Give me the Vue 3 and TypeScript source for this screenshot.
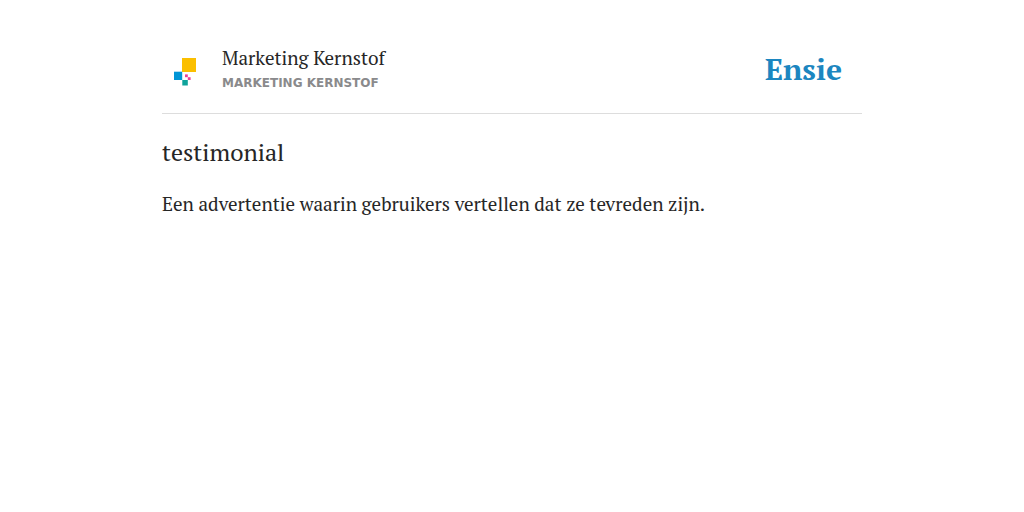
<script setup lang="ts">
const entry = {
  author: 'Marketing Kernstof',
  source: 'Marketing Kernstof',
  term: 'testimonial',
  definition: 'Een advertentie waarin gebruikers vertellen dat ze tevreden zijn.',
}
</script>

<template>
  <main class="page">
    <header class="header">
      <svg class="avatar" viewBox="0 0 50 50" aria-hidden="true">
        <rect x="20" y="12" width="14" height="14" fill="#fbbf00" />
        <rect x="12" y="25.7" width="8.2" height="8.3" fill="#0095d6" />
        <rect x="20.3" y="34" width="5.5" height="5.5" fill="#0fa39b" />
        <rect x="23" y="28.4" width="2.8" height="2.8" fill="#ee3f96" />
        <rect x="25.8" y="31.2" width="2.8" height="2.8" fill="#ee3f96" />
      </svg>
      <div class="byline">
        <div class="author">{{ entry.author }}</div>
        <div class="source">{{ entry.source }}</div>
      </div>
      <div class="brand">Ensie</div>
    </header>
    <h1 class="term">{{ entry.term }}</h1>
    <p class="definition">{{ entry.definition }}</p>
  </main>
</template>

<style scoped>
.page {
  max-width: 700px;
  margin: 0 auto;
  padding: 46px 16px 0;
  color: #262626;
  font-family: "PT Serif", "Noto Serif", "Liberation Serif", serif;
}
.header {
  display: flex;
  align-items: flex-start;
  padding-bottom: 17px;
  border-bottom: 1px solid #ddd;
}
.avatar {
  width: 50px;
  height: 50px;
  margin-right: 10px;
}
.byline {
  flex: 1;
}
.author {
  font-size: 19px;
  line-height: 24px;
}
.source {
  color: #8a8a8c;
  font: bold 12px/26px "DejaVu Sans", sans-serif;
  text-transform: uppercase;
}
.brand {
  margin-right: 20px;
  color: #1c86c0;
  font-size: 30px;
  font-weight: bold;
  line-height: 46px;
}
.term {
  margin: 22px 0 0;
  font-size: 24px;
  font-weight: normal;
  line-height: 32px;
}
.definition {
  margin: 20px 0 0;
  font-size: 19px;
  line-height: 32px;
}
</style>
